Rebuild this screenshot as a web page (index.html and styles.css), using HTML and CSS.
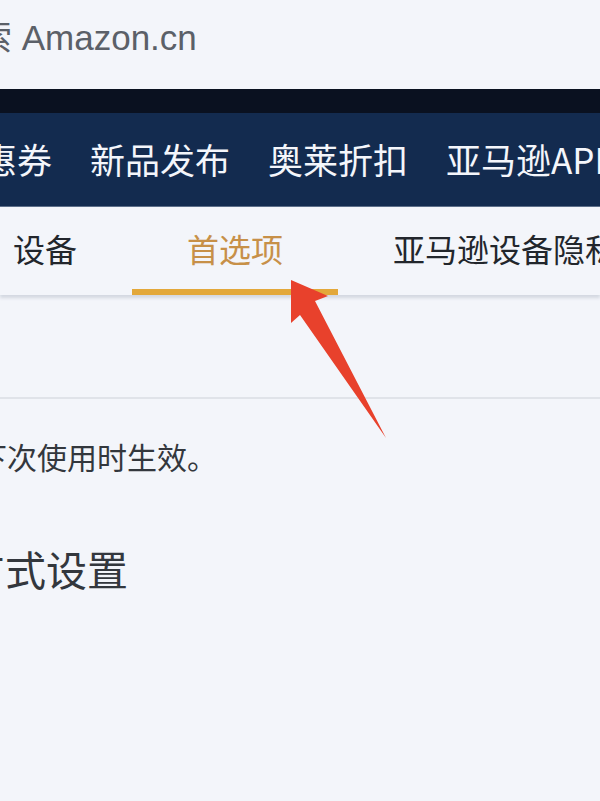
FILE: index.html
```html
<!DOCTYPE html>
<html lang="zh-CN">
<head>
<meta charset="utf-8">
<title>Amazon.cn 首选项</title>
<link rel="stylesheet" href="styles.css">
</head>
<body>
<div class="page">
  <div class="search"><span class="search-text">搜索 Amazon.cn</span></div>
  <div class="topbar"></div>
  <nav class="nav">
    <span class="nav-item first">优惠券</span>
    <span class="nav-item">新品发布</span>
    <span class="nav-item">奥莱折扣</span>
    <span class="nav-item">亚马逊APP</span>
  </nav>
  <div class="tabs">
    <span class="tab first">设备</span>
    <span class="tab active">首选项</span>
    <span class="tab">亚马逊设备隐私</span>
  </div>
  <div class="content">
    <div class="rule"></div>
    <p class="note">下次使用时生效。</p>
    <h2 class="heading">方式设置</h2>
  </div>
  <svg class="arrow" width="600" height="801" viewBox="0 0 600 801">
    <polygon points="291,280 328,296 315,301 386,438 300,315 291,323" fill="#e8412c"/>
  </svg>
</div>
</body>
</html>
```

FILE: styles.css
```css
html, body {
  margin: 0;
  padding: 0;
}
body {
  background: #f3f5fa;
  font-family: "Noto Sans CJK SC", "Noto Sans", sans-serif;
  overflow: hidden;
}
.page {
  position: relative;
  width: 600px;
  height: 801px;
  overflow: hidden;
  background: #f3f5fa;
}
.search {
  height: 89px;
  box-sizing: border-box;
  padding-top: 20px;
  white-space: nowrap;
  font-family: "Liberation Sans", "Noto Sans CJK SC", sans-serif;
  font-size: 35px;
  line-height: 35px;
}
.search-text {
  display: block;
  margin-left: -58px;
  color: #5b6068;
}
.topbar {
  height: 24px;
  background: #0a1120;
}
.nav {
  height: 93px;
  background: #132b4f;
  border-bottom: 1px solid #5d6f8a;
  display: flex;
  align-items: center;
  gap: 38px;
  white-space: nowrap;
  overflow: hidden;
}
.nav-item {
  font-size: 35px;
  color: #f4f6fb;
  line-height: 1;
  flex: none;
  padding-bottom: 3px;
}
.nav-item.first {
  margin-left: -53px;
}
.tabs {
  height: 88px;
  display: flex;
  white-space: nowrap;
  overflow: hidden;
  box-shadow: 0 3px 3px rgba(120, 130, 150, 0.25);
  position: relative;
}
.tab {
  flex: none;
  padding: 0 55px;
  font-size: 32px;
  color: #22262c;
  display: flex;
  align-items: center;
  padding-bottom: 0;
  border-bottom: 6px solid transparent;
  box-sizing: border-box;
  height: 88px;
}
.tab.first {
  margin-left: -42px;
}
.tab.active {
  color: #c79048;
  border-bottom-color: #e3a83a;
}
.content {
  padding-top: 102px;
}
.rule {
  height: 2px;
  background: #e0e3e9;
}
.note {
  margin: 39px 0 0 -23px;
  font-size: 30px;
  line-height: 36px;
  color: #33373d;
  white-space: nowrap;
}
.heading {
  margin: 70px 0 0 -36px;
  font-size: 41px;
  font-weight: normal;
  line-height: 48px;
  color: #33373d;
  white-space: nowrap;
}
.arrow {
  position: absolute;
  left: 0;
  top: 0;
  pointer-events: none;
}
```
